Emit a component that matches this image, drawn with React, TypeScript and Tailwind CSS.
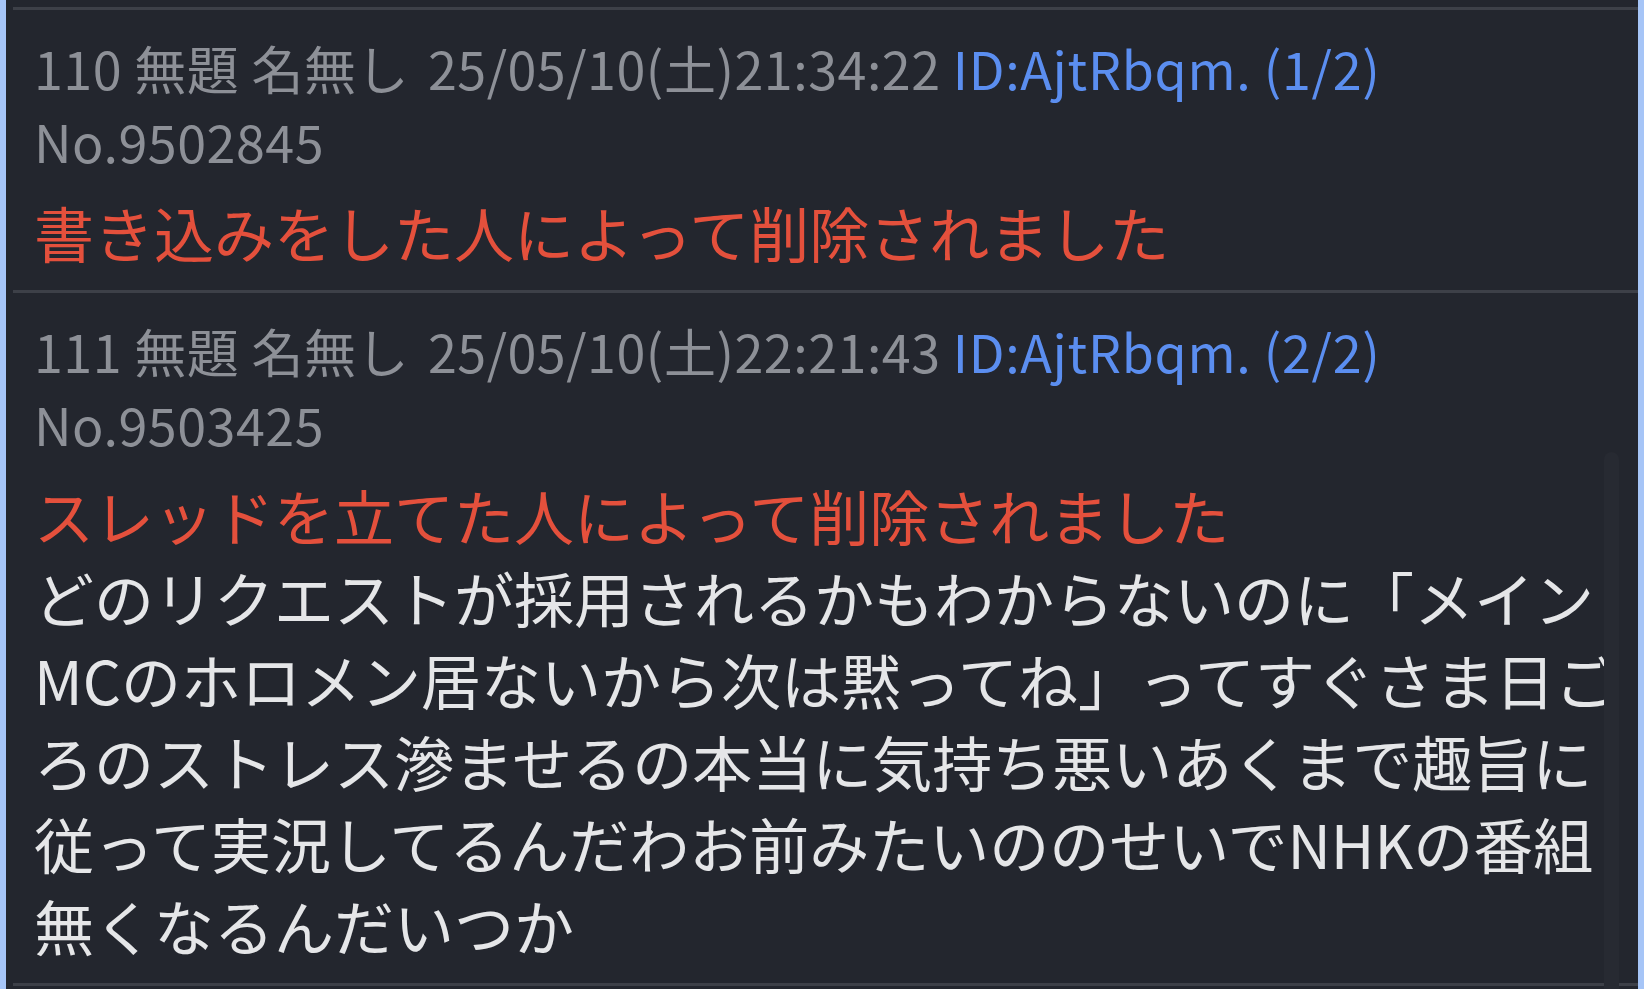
import React from "react";

type Post = {
  num: number;
  date: string;
  id: string;
  count: string;
  no: string;
  deleted: string;
  body?: string;
};

const posts: Post[] = [
  {
    num: 110,
    date: "25/05/10(土)21:34:22",
    id: "ID:AjtRbqm.",
    count: "(1/2)",
    no: "No.9502845",
    deleted: "書き込みをした人によって削除されました",
  },
  {
    num: 111,
    date: "25/05/10(土)22:21:43",
    id: "ID:AjtRbqm.",
    count: "(2/2)",
    no: "No.9503425",
    deleted: "スレッドを立てた人によって削除されました",
    body:
      "どのリクエストが採用されるかもわからないのに「メインMCのホロメン居ないから次は黙ってね」ってすぐさま日ごろのストレス滲ませるの本当に気持ち悪いあくまで趣旨に従って実況してるんだわお前みたいののせいでNHKの番組無くなるんだいつか",
  },
];

const PostItem = ({ post }: { post: Post }) => {
  return (
    <div className="border-t-[3px] border-[#3d4048] pl-[21px] pr-[14px] pt-[21px] pb-[17px]">
      <div className="text-[52px] leading-[73px] tracking-[0.5px] text-[#8d9097]">
        <span>{post.num} 無題 </span>
        <span className="mr-[19px]">名無し</span>
        <span>{post.date} </span>
        <span className="tracking-[0.7px] text-[#5b8ef0]">
          {post.id} {post.count}
        </span>{" "}
        <span>{post.no}</span>
      </div>
      <div className="mt-[14px] text-[60px] leading-[82px]">
        <div className="text-[#e4503c]">{post.deleted}</div>
        {post.body && <div className="text-[#e5e6e8]">{post.body}</div>}
      </div>
    </div>
  );
};

export default function App() {
  return (
    <div
      className="h-[989px] w-[1644px] overflow-hidden bg-[#a6c5f7] px-[6px]"
      style={{ fontFamily: '"Noto Sans CJK JP", "Noto Sans", sans-serif' }}
    >
      <div className="relative h-full bg-[#23262e] pt-[7px] pl-[7px]">
        <div className="flex flex-col">
          {posts.map((p) => (
            <PostItem key={p.num} post={p} />
          ))}
          <div className="border-t-[3px] border-[#3d4048]" />
        </div>
        <div className="absolute right-[19px] top-[452px] bottom-0 w-[15px] rounded-t-full bg-[#272a32]" />
      </div>
    </div>
  );
}
